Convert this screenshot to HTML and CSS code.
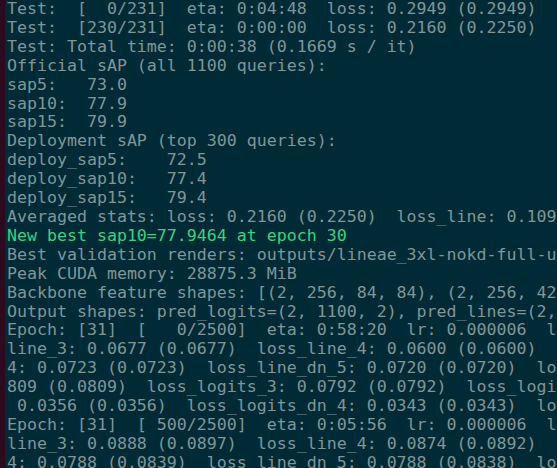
FILE: index.html
```html
<!DOCTYPE html>
<html>
<head>
<meta charset="utf-8">
<link rel="stylesheet" href="styles.css">
</head>
<body>
<div class="window">
<div class="edge"></div>
<pre class="term">Test:  [  0/231]  eta: 0:04:48  loss: 0.2949 (0.2949)
Test:  [230/231]  eta: 0:00:00  loss: 0.2160 (0.2250)
Test: Total time: 0:00:38 (0.1669 s / it)
Official sAP (all 1100 queries):
sap5:   73.0
sap10:  77.9
sap15:  79.9
Deployment sAP (top 300 queries):
deploy_sap5:    72.5
deploy_sap10:   77.4
deploy_sap15:   79.4
Averaged stats: loss: 0.2160 (0.2250)  loss_line: 0.109
<span class="ok">New best sap10=77.9464 at epoch 30</span>
Best validation renders: outputs/lineae_3xl-nokd-full-u
Peak CUDA memory: 28875.3 MiB
Backbone feature shapes: [(2, 256, 84, 84), (2, 256, 42
Output shapes: pred_logits=(2, 1100, 2), pred_lines=(2,
Epoch: [31]  [   0/2500]  eta: 0:58:20  lr: 0.000006  l
line_3: 0.0677 (0.0677)  loss_line_4: 0.0600 (0.0600)
4: 0.0723 (0.0723)  loss_line_dn_5: 0.0720 (0.0720)  lo
809 (0.0809)  loss_logits_3: 0.0792 (0.0792)  loss_logi
 0.0356 (0.0356)  loss_logits_dn_4: 0.0343 (0.0343)  lo
Epoch: [31]  [ 500/2500]  eta: 0:05:56  lr: 0.000006  l
line_3: 0.0888 (0.0897)  loss_line_4: 0.0874 (0.0892)
4: 0.0788 (0.0839)  loss_line_dn_5: 0.0788 (0.0838)  lo</pre>
</div>
</body>
</html>
```
FILE: styles.css
```css
html, body {
  margin: 0;
  padding: 0;
  background: #002b36;
}
.window {
  display: flex;
  width: 557px;
  height: 468px;
  overflow: hidden;
  background: #002b36;
}
.edge {
  flex: 0 0 5px;
  background: #2c0b1f;
}
.term {
  flex: 1;
  margin: 0;
  padding: 0 0 0 2px;
  font-family: "DejaVu Sans Mono", monospace;
  font-size: 16.6px;
  line-height: 18.9px;
  color: #839496;
  white-space: pre;
  overflow: hidden;
}
.ok {
  color: #3fd07e;
}
```
